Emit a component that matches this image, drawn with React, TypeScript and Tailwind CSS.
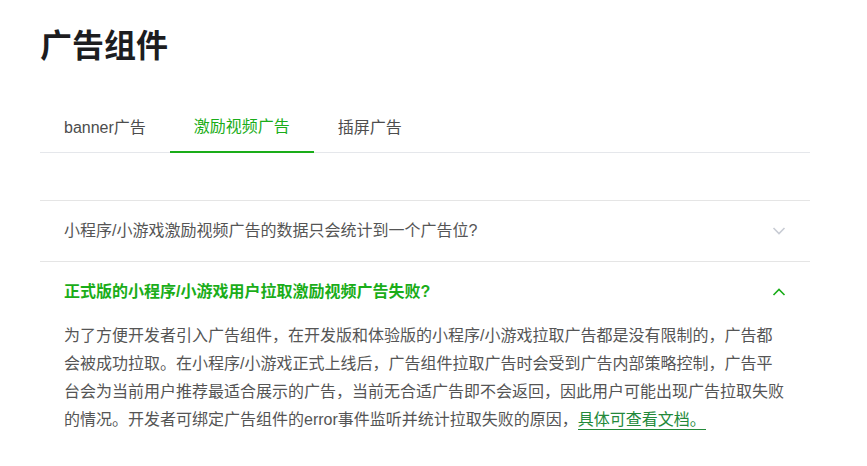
import React from "react";

const font = { fontFamily: '"Liberation Sans", "Noto Sans CJK SC", sans-serif' };

function Chevron({ up, color }: { up?: boolean; color: string }) {
  return (
    <svg width="14" height="8" viewBox="0 0 14 8" fill="none">
      <path
        d={up ? "M1.5 7L7 1.5L12.5 7" : "M1.5 1L7 6.5L12.5 1"}
        stroke={color}
        strokeWidth="1.6"
      />
    </svg>
  );
}

export default function App() {
  return (
    <div className="bg-white w-[867px] h-[466px] overflow-hidden" style={font}>
      <div className="px-[40px] pt-[22px] w-[850px]">
        <h1 className="text-[32px] leading-[48px] font-bold text-[#1d1d1f]">广告组件</h1>
        <div className="mt-[34px] flex border-b border-[#e5e7eb] h-[49px]">
          <div className="px-6 flex items-center text-[16px] text-[#4d4d4d] h-[48px] pb-[1px]">banner广告</div>
          <div className="px-6 flex items-center text-[16px] text-[#1aad19] h-[49px] border-b-2 border-[#1aad19] -mb-px pb-[2px]">激励视频广告</div>
          <div className="px-6 flex items-center text-[16px] text-[#4d4d4d] h-[48px] pb-[1px]">插屏广告</div>
        </div>
        <div className="mt-[47px] border-t border-[#e5e5e5]">
          <div className="flex items-center justify-between px-6 py-[18px] leading-[24px] border-b border-[#e5e5e5]">
            <span className="text-[16px] text-[#555]">小程序/小游戏激励视频广告的数据只会统计到一个广告位?</span>
            <Chevron color="#c8ccd4" />
          </div>
          <div className="flex items-center justify-between px-6 py-[18px] leading-[24px]">
            <span className="text-[16px] font-bold text-[#1aad19]">正式版的小程序/小游戏用户拉取激励视频广告失败?</span>
            <Chevron up color="#1aad19" />
          </div>
          <div className="px-6 text-[16px] leading-[28px] text-[#555]">
            为了方便开发者引入广告组件，在开发版和体验版的小程序/小游戏拉取广告都是没有限制的，广告都会被成功拉取。在小程序/小游戏正式上线后，广告组件拉取广告时会受到广告内部策略控制，广告平台会为当前用户推荐最适合展示的广告，当前无合适广告即不会返回，因此用户可能出现广告拉取失败的情况。开发者可绑定广告组件的error事件监听并统计拉取失败的原因，
            <a className="text-[#23893a] border-b border-[#23893a] pb-[1px]">具体可查看文档。</a>
          </div>
        </div>
      </div>
    </div>
  );
}
